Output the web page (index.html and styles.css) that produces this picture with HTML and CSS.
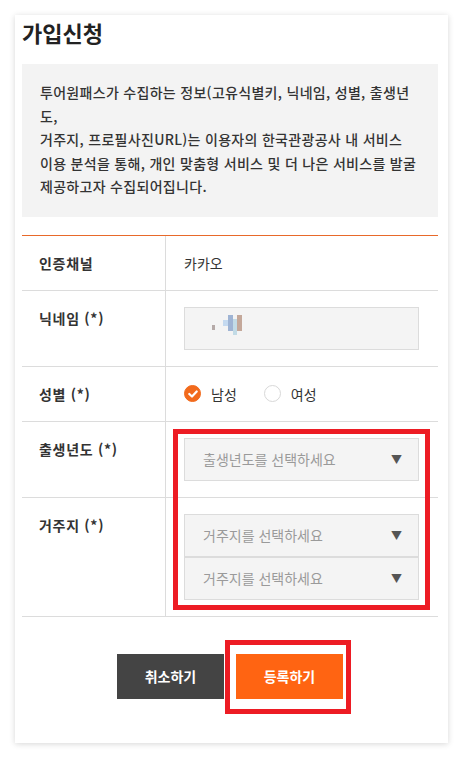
FILE: index.html
```html
<!DOCTYPE html>
<html lang="ko">
<head>
<meta charset="utf-8">
<title>가입신청</title>
<link rel="stylesheet" href="styles.css">
</head>
<body>
<div class="card">
  <h2 class="title">가입신청</h2>
  <div class="notice">투어원패스가 수집하는 정보(고유식별키, 닉네임, 성별, 출생년도,<br>거주지, 프로필사진URL)는 이용자의 한국관광공사 내 서비스 이&#8288;용 분석을 통해, 개인 맞춤형 서비스 및 더 나은 서비스를 발굴 제공하고자 수집되어집니다.</div>
  <div class="form">
    <div class="row">
      <div class="label">인증채널</div>
      <div class="value text">카카오</div>
    </div>
    <div class="row">
      <div class="label">닉네임 (*)</div>
      <div class="value">
        <div class="input">
          <span class="mosaic"><i class="m1"></i><i class="m2"></i><i class="m3"></i><i class="m4"></i><i class="m5"></i></span>
        </div>
      </div>
    </div>
    <div class="row">
      <div class="label">성별 (*)</div>
      <div class="value text radios">
        <label class="radio"><span class="dot on"><svg width="10" height="8" viewBox="0 0 10 8"><path d="M1.3 4 L4 6.5 L8.7 1.5" fill="none" stroke="#fff" stroke-width="2.2" stroke-linecap="round" stroke-linejoin="round"/></svg></span>남성</label>
        <label class="radio"><span class="dot"></span>여성</label>
      </div>
    </div>
    <div class="row">
      <div class="label">출생년도 (*)</div>
      <div class="value">
        <div class="select"><span>출생년도를 선택하세요</span><span class="arrow">▼</span></div>
      </div>
    </div>
    <div class="row">
      <div class="label">거주지 (*)</div>
      <div class="value">
        <div class="select"><span>거주지를 선택하세요</span><span class="arrow">▼</span></div>
        <div class="select"><span>거주지를 선택하세요</span><span class="arrow">▼</span></div>
      </div>
    </div>
  </div>
  <div class="buttons">
    <button class="btn cancel">취소하기</button>
    <button class="btn submit">등록하기</button>
  </div>
</div>
<div class="mark mark-select"></div>
<div class="mark mark-button"></div>
</body>
</html>
```

FILE: styles.css
```css
* { box-sizing: border-box; }
html, body { margin: 0; padding: 0; background: #fff; }
body {
  font-family: "Noto Sans CJK KR", "Noto Sans", sans-serif;
  color: #333;
  position: relative;
  width: 463px;
  height: 759px;
  overflow: hidden;
}
.card {
  margin: 15px 0 0 15px;
  width: 433px;
  height: 728px;
  background: #fff;
  box-shadow: 0 1px 6px rgba(0,0,0,0.16);
  padding: 2px 10px 0 7px;
}
.title {
  margin: 0;
  font-size: 22px;
  line-height: 30px;
  font-weight: 700;
  color: #222;
}
.notice {
  margin-top: 17px;
  background: #f3f3f3;
  padding: 17px 21px 18px 18px;
  font-size: 14px;
  letter-spacing: 0.3px;
  line-height: 23.5px;
  font-weight: 500;
  color: #333;
  word-break: break-all;
}
.form {
  margin-top: 18px;
  border-top: 1px solid #e8692a;
}
.row {
  display: flex;
  border-bottom: 1px solid #dcdcdc;
}
.label {
  width: 144px;
  flex: none;
  border-right: 1px solid #dcdcdc;
  padding: 17px 0 17px 17px;
  font-size: 14px;
  letter-spacing: 0.7px;
  line-height: 20px;
  font-weight: 700;
  color: #333;
}
.value {
  flex: 1;
  padding: 16px 19px 16px 18px;
}
.value.text {
  padding-top: 17px;
  padding-bottom: 17px;
  font-size: 14px;
  line-height: 20px;
}
.input {
  height: 43px;
  background: #f4f4f4;
  border: 1px solid #dcdcdc;
  padding: 7px 0 0 27px;
}
.mosaic { display: flex; align-items: flex-start; filter: blur(0.4px); }
.mosaic i { display: block; }
.mosaic .m1 { width: 3px; height: 5px; background: #b5aaa8; margin-top: 10px; margin-right: 8px; }
.mosaic .m2 { width: 5px; height: 6px; background: #c5daf0; margin-top: 5px; }
.mosaic .m3 { width: 5px; height: 16px; background: #9fb4d4; }
.mosaic .m4 { width: 4px; height: 16px; background: #c2dbe6; margin-top: 4px; }
.mosaic .m5 { width: 5px; height: 16px; background: #c4a89a; }
.radios { display: flex; align-items: center; gap: 27px; }
.radio { display: flex; align-items: center; gap: 10px; color: #333; }
.dot {
  width: 17px; height: 17px; border-radius: 50%;
  border: 1px solid #d8d8d8; background: #fff;
  display: flex; align-items: center; justify-content: center;
}
.dot.on { background: #f26a1c; border-color: #f26a1c; }
.select {
  height: 43px;
  background: #f4f4f4;
  border: 1px solid #dcdcdc;
  display: flex;
  align-items: center;
  justify-content: space-between;
  padding: 0 16px 0 18px;
  font-size: 14px;
  color: #9a9a9a;
}
.arrow { font-size: 11px; color: #555; }
.buttons {
  display: flex;
  justify-content: center;
  gap: 12px;
  margin-top: 37px;
}
.btn {
  width: 107px;
  height: 45px;
  border: 0;
  font-family: inherit;
  font-size: 14px;
  font-weight: 700;
  color: #fff;
  padding: 0;
}
.cancel { background: #444; }
.submit { background: #ff6412; }
.mark {
  position: absolute;
  border: 5px solid #ed1c24;
}
.mark-select { left: 173px; top: 429px; width: 257px; height: 181px; }
.mark-button { left: 225px; top: 640px; width: 126px; height: 74px; }
```
